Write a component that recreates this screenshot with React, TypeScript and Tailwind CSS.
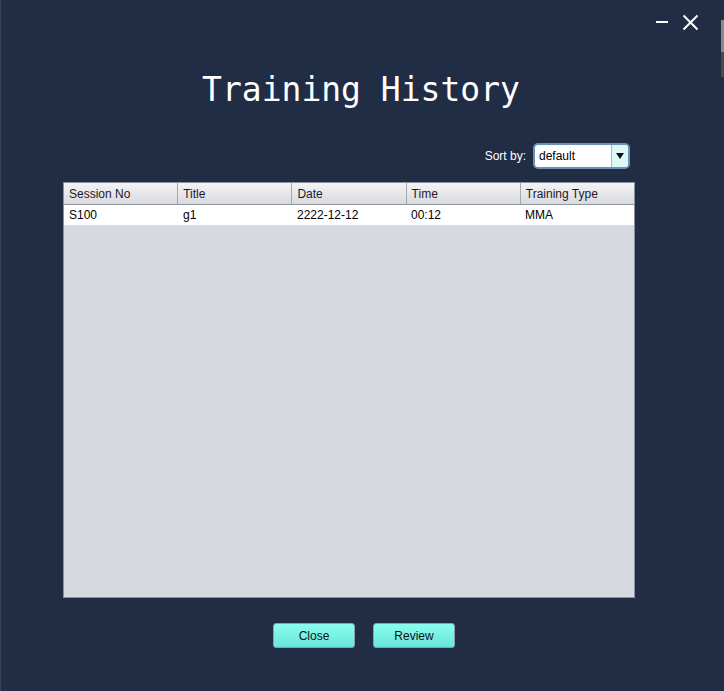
import React from "react";

const cols = ["Session No", "Title", "Date", "Time", "Training Type"];
const row = ["S100", "g1", "2222-12-12", "00:12", "MMA"];

export default function App() {
  return (
    <div className="w-[724px] h-[691px] bg-[#212c45] relative overflow-hidden" style={{ fontFamily: '"Liberation Sans", Arial, sans-serif' }}>
      <div className="absolute left-0 top-0 w-px h-[691px] bg-[#3a4256]" />
      <div className="absolute right-0 top-[20px] w-[3px] h-[57px] bg-[#8a8a8a]" />
      <div className="absolute right-0 top-[52px] w-[3px] h-[25px] bg-[#4a4a4a]" />
      <div className="flex flex-col w-[721px]">
        <div className="w-full h-[44px] flex justify-end items-center gap-[14px] pr-[22px]">
          <div className="w-[12px] h-[2px] bg-white" />
          <svg width="17" height="17" viewBox="0 0 17 17" className="text-white">
            <path d="M1.5 1.5 L15.5 15.5 M15.5 1.5 L1.5 15.5" stroke="currentColor" strokeWidth="2" />
          </svg>
        </div>
        <div
          className="self-center text-white text-[33px] leading-none mt-[29px] ml-[1px]"
          style={{ fontFamily: '"DejaVu Sans Mono", monospace' }}
        >
          Training History
        </div>
        <div className="w-[572px] ml-[63px] flex justify-end items-center mt-[37px] pr-[5px] gap-[7px]">
          <span className="text-white text-[12px]">Sort by:</span>
          <div className="w-[97px] h-[26px] rounded-[5px] border-2 border-[#6f8fb7] bg-white flex items-stretch overflow-hidden">
            <div className="flex-1 flex items-center pl-[4px] text-[12px] text-black">default</div>
            <div className="w-[17px] bg-[#dcf8f8] border-l border-[#a6b8c6] flex items-center justify-center">
              <svg width="8" height="6" viewBox="0 0 8 6"><path d="M0 0 L8 0 L4 6 Z" fill="#111" /></svg>
            </div>
          </div>
        </div>
        <div className="w-[572px] ml-[63px] h-[416px] mt-[13px] border border-[#8b909c] bg-[#d6d9e0] flex flex-col">
          <div className="flex h-[22px] bg-gradient-to-b from-[#f4f4f6] to-[#d9dadf] border-b border-[#8f949e]">
            {cols.map((c, i) => (
              <div
                key={c}
                className={`flex-1 flex items-center pl-[5px] text-[12px] text-[#1a1a2e] ${i < 4 ? "border-r border-[#a4a8b2]" : ""}`}
              >
                {c}
              </div>
            ))}
          </div>
          <div className="flex h-[20px] bg-white">
            {row.map((c) => (
              <div key={c} className="flex-1 flex items-center pl-[5px] text-[12px] text-black">
                {c}
              </div>
            ))}
          </div>
        </div>
        <div className="flex gap-[18px] mt-[25px] ml-[273px]">
          {["Close", "Review"].map((b) => (
            <div
              key={b}
              className="w-[82px] h-[25px] rounded-[3px] border border-[#8aa0a8] bg-gradient-to-b from-[#8afdf0] to-[#68e6da] flex items-center justify-center text-[12px] text-[#111]"
            >
              {b}
            </div>
          ))}
        </div>
      </div>
    </div>
  );
}
